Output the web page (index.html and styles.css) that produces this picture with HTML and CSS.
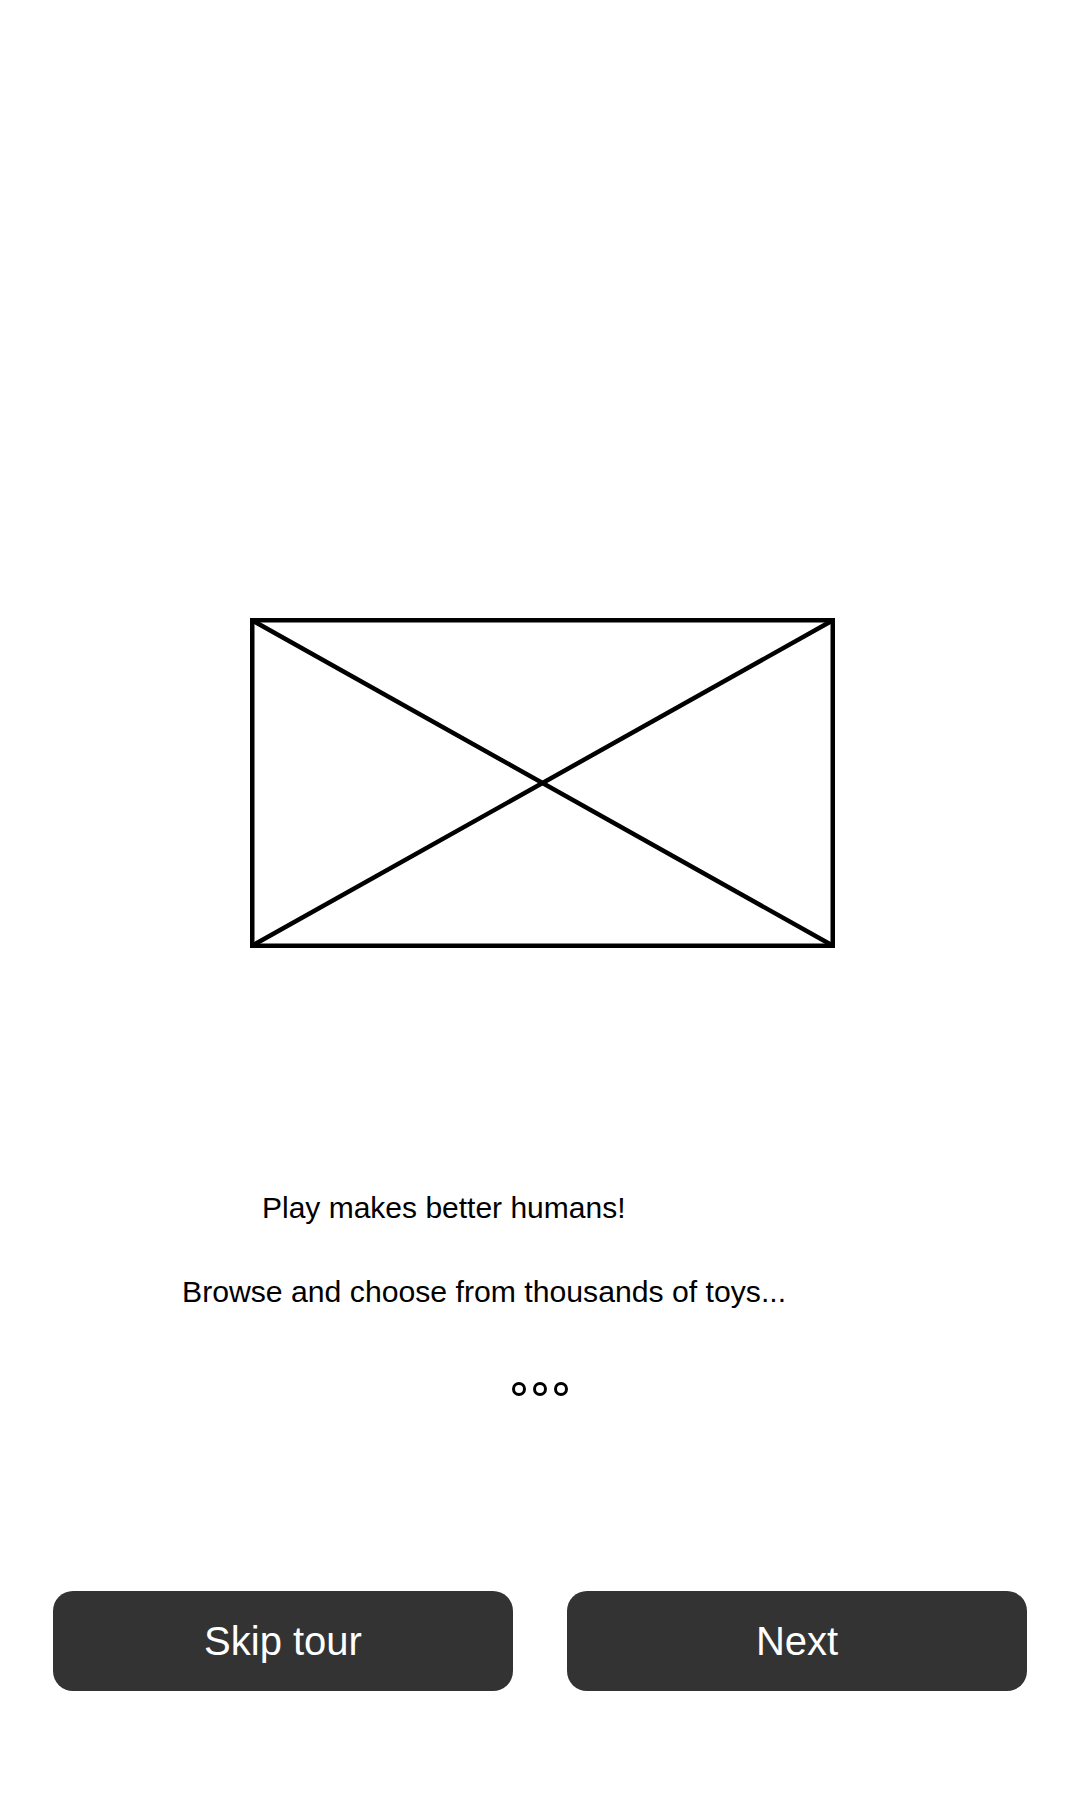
FILE: index.html
```html
<!DOCTYPE html>
<html lang="en">
<head>
<meta charset="utf-8">
<title>Tour</title>
<link rel="stylesheet" href="styles.css">
</head>
<body>
<main class="screen">
  <div class="placeholder">
    <svg class="placeholder-svg" width="585" height="330" viewBox="0 0 585 330">
      <rect x="2.25" y="2.25" width="580.5" height="325.5" fill="none" stroke="#000" stroke-width="4.5"/>
      <line x1="2.5" y1="2.5" x2="582.5" y2="327.5" stroke="#000" stroke-width="4.5"/>
      <line x1="582.5" y1="2.5" x2="2.5" y2="327.5" stroke="#000" stroke-width="4.5"/>
    </svg>
  </div>
  <div class="copy">
    <p class="title">Play makes better humans!</p>
    <p class="subtitle">Browse and choose from thousands of toys...</p>
  </div>
  <div class="dots">
    <span class="dot"></span>
    <span class="dot"></span>
    <span class="dot"></span>
  </div>
  <div class="actions">
    <button class="btn">Skip tour</button>
    <button class="btn">Next</button>
  </div>
</main>
</body>
</html>
```

FILE: styles.css
```css
html, body {
  margin: 0;
  padding: 0;
  background: #fff;
}
body {
  font-family: "Liberation Sans", Arial, sans-serif;
  color: #000;
}
.screen {
  width: 1080px;
  height: 1800px;
  display: flex;
  flex-direction: column;
}
.placeholder {
  margin-top: 618px;
  margin-left: 250px;
  width: 585px;
  height: 330px;
}
.placeholder-svg {
  display: block;
}
.copy {
  margin-top: 243px;
  display: flex;
  flex-direction: column;
  align-items: flex-start;
}
.title,
.subtitle {
  margin: 0;
  font-size: 30px;
  line-height: 34px;
}
.title {
  margin-left: 262px;
}
.subtitle {
  margin-top: 50px;
  margin-left: 182px;
  font-size: 30.2px;
}
.dots {
  margin-top: 73px;
  display: flex;
  justify-content: center;
  gap: 7px;
}
.dot {
  width: 14px;
  height: 14px;
  box-sizing: border-box;
  border: 3px solid #000;
  border-radius: 50%;
}
.actions {
  margin-top: 195px;
  margin-left: 53px;
  display: flex;
  gap: 54px;
}
.btn {
  width: 460px;
  height: 100px;
  border: none;
  border-radius: 20px;
  background: #333333;
  color: #fff;
  font-family: "Liberation Sans", Arial, sans-serif;
  font-size: 40px;
  padding: 0;
  display: flex;
  align-items: center;
  justify-content: center;
}
```
